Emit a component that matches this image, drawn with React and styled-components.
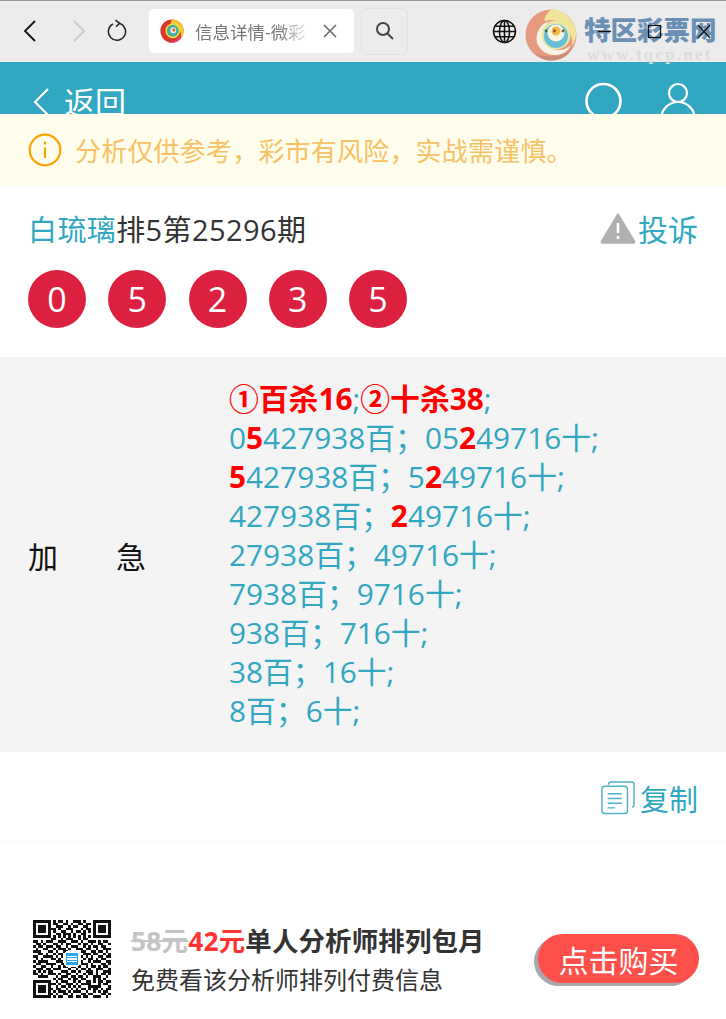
import React from "react";
import styled, { createGlobalStyle } from "styled-components";

const Global = createGlobalStyle`
  html, body { margin: 0; padding: 0; background: #fff; }
  body { font-family: "Open Sans", "Noto Sans CJK SC", sans-serif; }
`;
const Page = styled.div`
  position: relative; width: 726px; height: 1019px; overflow: hidden; background: #fff;
`;
const Chrome = styled.div`
  background: #ececec; border-top: 1px solid #9a9a9a; display: flex; align-items: center; box-sizing: border-box; height: 62px; padding-bottom: 1px;
`;
const NavIcon = styled.svg`
  flex: none; display: block; margin-left: ${p => p.$ml}px;
`;
const Tab = styled.div`
  margin-left: 22px; width: 205px; height: 44px; background: #fff; border-radius: 5px; display: flex; align-items: center; padding-left: 11px; box-sizing: border-box; flex: none;
`;
const TabTitle = styled.span`
  margin-left: 11px; width: 116px; overflow: hidden; white-space: nowrap; font-size: 17.5px; color: #777;
  -webkit-mask-image: linear-gradient(90deg, #000 72%, transparent 100%);
  mask-image: linear-gradient(90deg, #000 72%, transparent 100%);
`;
const SearchBox = styled.div`
  margin-left: 7px; width: 47px; height: 47px; flex: none; border: 1px solid #e2e2e2; border-radius: 5px; display: flex; align-items: center; justify-content: center; box-sizing: border-box;
`;
const Brand = styled.div`
  position: absolute; left: 525px; top: 9px; display: flex; align-items: flex-start; pointer-events: none;
`;
const BrandText = styled.div`
  margin-left: 7px; display: flex; flex-direction: column;
`;
const BrandName = styled.span`
  font-size: 26.5px; line-height: 30px; margin-top: 6px; font-weight: 900; color: #6b90b5; white-space: nowrap;
`;
const BrandUrl = styled.span`
  font-family: "Liberation Serif", serif; font-weight: 700; font-size: 17px; line-height: 16px; letter-spacing: 2.2px; color: #dcdcdc; margin-left: 3px; margin-top: 2px; white-space: nowrap;
`;
const WinControls = styled.svg`
  position: absolute; left: 597px; top: 22px;
`;
const Header = styled.div`
  height: 52px; background: #31a7c1; overflow: hidden; display: flex; align-items: flex-start; padding-top: 24px; box-sizing: border-box; color: #fff; padding-left: 32px;
`;
const BackText = styled.span`
  margin-left: 14px; font-size: 31px; line-height: 36px; margin-top: -2px;
`;
const HeaderRight = styled.div`
  margin-left: auto; display: flex; gap: 37px; padding-right: 30px; margin-top: -6px;
`;
const Notice = styled.div`
  height: 72px; background: #fffdec; display: flex; align-items: center; padding-left: 28px; box-sizing: border-box; color: #f8c163; font-size: 26px; white-space: nowrap;
`;
const NoticeText = styled.span` margin-left: 13px; letter-spacing: 0.2px; `;
const TitleRow = styled.div`
  height: 84px; display: flex; align-items: center; justify-content: space-between; padding: 0 28px; box-sizing: border-box; color: #333;
`;
const Title = styled.div` white-space: nowrap; font-size: 29px; letter-spacing: 0.4px; `;
const Teal = styled.span` color: #31a7c1; `;
const Complain = styled.div`
  display: flex; align-items: center; gap: 2px; color: #31a7c1; font-size: 30px;
`;
const Balls = styled.div`
  display: flex; gap: 22.25px; padding-left: 28px; height: 87px; align-items: flex-start;
`;
const Ball = styled.div`
  width: 58px; height: 58px; border-radius: 50%; background: #dc2140; color: #fff; font-size: 34px; display: flex; align-items: center; justify-content: center; flex: none;
`;
const Detail = styled.div`
  height: 395px; background: #f4f4f4; display: flex; align-items: center; box-sizing: border-box;
`;
const Label = styled.div`
  width: 229px; padding-left: 28px; box-sizing: border-box; font-size: 30px; color: #111; white-space: pre; letter-spacing: -0.7px; flex: none;
`;
const Lines = styled.div`
  font-size: 29.8px; line-height: 39px; color: #31a7c1; white-space: nowrap; margin-top: -1px;
`;
const Red = styled.b` color: #f00; font-weight: 700; `;
const CopyRow = styled.div`
  height: 89px; border-bottom: 1px solid #fafafa; box-sizing: border-box; display: flex; align-items: center; justify-content: flex-end; padding: 3px 28px 0 0; color: #31a7c1; font-size: 29px; gap: 5px;
`;
const Footer = styled.div`
  display: flex; align-items: flex-start; padding: 79px 27px 0 33px;
`;
const Info = styled.div`
  margin-left: 20px; display: flex; flex-direction: column; white-space: nowrap;
`;
const Price = styled.div`
  font-size: 26.4px; line-height: 30px; font-weight: 700; color: #333; margin-top: 6px; letter-spacing: 0.2px;
`;
const Old = styled.span` color: #c4c4c4; text-decoration: line-through; `;
const New = styled.span` color: #ff3333; `;
const Sub = styled.div`
  font-size: 24px; line-height: 30px; color: #333; margin-top: 9px;
`;
const Buy = styled.div`
  margin-left: auto; margin-top: 14px; width: 161px; height: 49px; border-radius: 25px; background: #ff4f4b; box-shadow: -4px 3px 0 #a9a9ad; color: #fff; font-size: 30px; display: flex; align-items: center; justify-content: center; flex: none;
`;

const Favicon = () => (
  <svg width="24" height="24" viewBox="0 0 24 24" style={{ display: "block", flex: "none" }}>
    <circle cx="12" cy="12" r="11.6" fill="#d9352b" />
    <path d="M12 .4A11.6 11.6 0 0 1 23.6 12c0 3-1 5.500-3 7.800 1-3 .6-6-1-8.500C17.500 7.800 14 5.800 10 6.200c1-2.500 1-4.300 2-5.800z" fill="#f7c92d" />
    <path d="M20.600 19.800A11.600 11.600 0 0 1 8 22.900c5 .4 10-2 11.600-7 .6 1.400 1 2.800 1 3.900z" fill="#e3467f" />
    <circle cx="12.800" cy="11.800" r="7.400" fill="#f3e04a" />
    <circle cx="12.800" cy="11.800" r="6" fill="#4db56a" />
    <circle cx="13" cy="11.600" r="4.500" fill="#38a8dc" />
    <circle cx="13.300" cy="11.300" r="3" fill="#f6f1d2" />
    <circle cx="13.800" cy="11" r="1.700" fill="#e8702a" />
  </svg>
);
const BrandMark = () => (
  <svg width="52" height="52" viewBox="0 0 52 52" style={{ display: "block", flex: "none" }}>
    <circle cx="26" cy="26" r="25.500" fill="#e59a7e" />
    <path d="M26 .5A25.500 25.500 0 0 1 51 22c.5 5-1 11-4 15 1-8-2-17-9-22-6-4-12-5-19-3 1-5 4-9 7-11.500z" fill="#f3e49c" />
    <path d="M9 44c5 5 11 7.500 17 7.500 10 0 18-5 22-14-5 7-13 10-21 10-7 0-13-1-18-3.500z" fill="#c88d79" />
    <path d="M12 34c-2-9 2-18 12-22-5 5-7 12-5 19 2 6 8 10 15 10 5 0 9-2 12-5-3 7-10 10-17 10-8 0-14-5-17-12z" fill="#f7f3e6" />
    <circle cx="31" cy="26" r="14.500" fill="#e9e8a3" />
    <circle cx="31" cy="27" r="12" fill="#67bcd6" />
    <circle cx="31" cy="24" r="8.500" fill="#fbf6e2" />
    <circle cx="31" cy="22" r="4.500" fill="#f2b94d" />
    <circle cx="21" cy="22" r="1.400" fill="#2d6a58" />
    <circle cx="29.500" cy="22" r="1.400" fill="#8a5a16" />
    <circle cx="38" cy="22" r="1.400" fill="#8a5a16" />
  </svg>
);

const seed = [
  "1111111010110100111010001111111","1000001011001101001101101000001","1011101001110010110011001011101",
  "1011101110100111000101101011101","1011101010011001011010101011101","1000001001101110100110001000001",
  "1111111010101010101010101111111","0000000110010111001011000000000","1101011100111001110100111010110",
  "0110100011010110001011010011001","1011011101100101110010101101100","0100110010111010011101100100111",
  "1110001101001100000110011011010","0011010010110000000011101100101","1100111101010000000101010011011",
  "0101000110100000000010110101100","1011110001110000000100101110011","0110011110011000000111010001101",
  "1001100100101101101001011010110","0111011011100010010110100111001","1010101100011101101001110100111",
  "1101001110100110010010110101101","0011110001011101101101001110010",
  "0000000010110010110110001010100","1111111001011100101001101011011","1000001110100111010111100010110",
  "1011101001011010101000111110001","1011101101100101010110101101011","1011101010111010111001001010110",
  "1000001101001101000110110001101","1111111010110011011011001110010",
];
const QR = () => (
  <svg width="78" height="78" viewBox="0 0 31 31" shapeRendering="crispEdges" style={{ display: "block", flex: "none" }}>
    {seed.map((row, y) =>
      row.split("").map((c, x) => (c === "1" ? <rect key={x + "-" + y} x={x} y={y} width="1" height="1" fill="#111" /> : null))
    )}
    <rect x="12.5" y="12.5" width="6" height="6" rx="0.6" fill="#fff" />
    <rect x="13" y="13" width="5" height="5" rx="0.6" fill="#2aa4ea" />
    <path d="M13.6 14.4h3.8M13.6 15.5h3.8M13.6 16.6h3.8" stroke="#fff" strokeWidth="0.4" />
  </svg>
);

export default function App() {
  return (
    <Page>
      <Global />
      <Chrome>
        <NavIcon $ml={22} width="16" height="24" viewBox="0 0 16 24" fill="none" stroke="#111" strokeWidth="1.8"><path d="M13 2 3 12l10 10" /></NavIcon>
        <NavIcon $ml={33} width="16" height="24" viewBox="0 0 16 24" fill="none" stroke="#ccc" strokeWidth="1.8"><path d="M3 2l10 10L3 22" /></NavIcon>
        <NavIcon $ml={20} width="20" height="24" viewBox="0 0 20 24" fill="none" stroke="#222" strokeWidth="1.5"><path d="M12.5 4.400A8.600 8.600 0 1 1 6 5" /><path d="M8.500 1.200 12.700 4.400 9 7.600" /></NavIcon>
        <Tab>
          <Favicon />
          <TabTitle>信息详情-微彩</TabTitle>
          <NavIcon $ml={12} width="14" height="14" viewBox="0 0 14 14" fill="none" stroke="#666" strokeWidth="1.5"><path d="M1 1l12 12M13 1 1 13" /></NavIcon>
        </Tab>
        <SearchBox>
          <svg width="20" height="20" viewBox="0 0 20 20" fill="none" stroke="#444" strokeWidth="2"><circle cx="8" cy="8" r="6" /><path d="M12.500 12.500 18 18" /></svg>
        </SearchBox>
        <NavIcon $ml={84} width="25" height="25" viewBox="0 0 26 26" fill="none" stroke="#111" strokeWidth="1.6"><circle cx="13" cy="13" r="11.400" /><ellipse cx="13" cy="13" rx="5.200" ry="11.400" /><path d="M13 1.600v22.800M1.600 13h22.800M3.200 7.500h19.600M3.200 18.500h19.600" /></NavIcon>
      </Chrome>
      <Brand>
        <BrandMark />
        <BrandText>
          <BrandName>特区彩票网</BrandName>
          <BrandUrl>www.tqcp.net</BrandUrl>
        </BrandText>
      </Brand>
      <WinControls width="120" height="20" viewBox="0 0 120 20" fill="none" stroke="#111" strokeWidth="1.2">
        <path d="M1 9.500h13" />
        <rect x="51.500" y="3.500" width="12" height="12" />
        <path d="M101 3l12 13M113 3l-12 13" />
      </WinControls>
      <Header>
        <svg width="18" height="32" viewBox="0 0 18 32" fill="none" stroke="#fff" strokeWidth="2.2" style={{ flex: "none" }}><path d="M16 3 3 16l13 13" /></svg>
        <BackText>返回</BackText>
        <HeaderRight>
          <svg width="40" height="44" viewBox="0 0 40 44" fill="none" stroke="#fff" strokeWidth="2.6"><circle cx="20.500" cy="21" r="17" /><path d="M31 34l8 8" /></svg>
          <svg width="36" height="44" viewBox="0 0 36 44" fill="none" stroke="#fff" strokeWidth="2.2"><circle cx="18" cy="13" r="9" /><path d="M1 40c0-11 8-18 17-18s17 7 17 18" /></svg>
        </HeaderRight>
      </Header>
      <Notice>
        <svg width="34" height="34" viewBox="0 0 34 34" fill="none" stroke="#ffa200" strokeWidth="2.2" style={{ flex: "none" }}><circle cx="17" cy="17" r="15.300" /><path d="M17 14.500V25" /><path d="M17 8.500v3" /></svg>
        <NoticeText>分析仅供参考，彩市有风险，实战需谨慎。</NoticeText>
      </Notice>
      <TitleRow>
        <Title><Teal>白琉璃</Teal>排5第25296期</Title>
        <Complain>
          <svg width="36" height="32" viewBox="0 0 36 32"><path d="M18 2 34.500 29.500a1 1 0 0 1-1 1.500H2.500a1 1 0 0 1-1-1.500z" fill="#b0b0b0" stroke="#b0b0b0" strokeWidth="1.500" strokeLinejoin="round" /><path d="M18 11v10M18 24v3" stroke="#fff" strokeWidth="2.600" /></svg>
          投诉
        </Complain>
      </TitleRow>
      <Balls>
        {["0", "5", "2", "3", "5"].map((n, i) => <Ball key={i}>{n}</Ball>)}
      </Balls>
      <Detail>
        <Label>加　　急</Label>
        <Lines>
          <div><Red>①百杀16</Red>;<Red>②十杀38</Red>;</div>
          <div>0<Red>5</Red>427938百；05<Red>2</Red>49716十;</div>
          <div><Red>5</Red>427938百；5<Red>2</Red>49716十;</div>
          <div>427938百；<Red>2</Red>49716十;</div>
          <div>27938百；49716十;</div>
          <div>7938百；9716十;</div>
          <div>938百；716十;</div>
          <div>38百；16十;</div>
          <div>8百；6十;</div>
        </Lines>
      </Detail>
      <CopyRow>
        <svg width="34" height="35" viewBox="0 0 36 36" fill="none" stroke="#4fb1c9" strokeWidth="1.500"><path d="M8 4.500c0-2 1-3 3-3h21c2 0 3 1 3 3v21c0 1.500-.7 2.500-2 3" /><rect x="1" y="6" width="27" height="29" rx="3" /><path d="M7 14h15M7 19h15M7 24h15M7 29h8" /></svg>
        复制
      </CopyRow>
      <Footer>
        <QR />
        <Info>
          <Price><Old>58元</Old><New>42元</New>单人分析师排列包月</Price>
          <Sub>免费看该分析师排列付费信息</Sub>
        </Info>
        <Buy>点击购买</Buy>
      </Footer>
    </Page>
  );
}
